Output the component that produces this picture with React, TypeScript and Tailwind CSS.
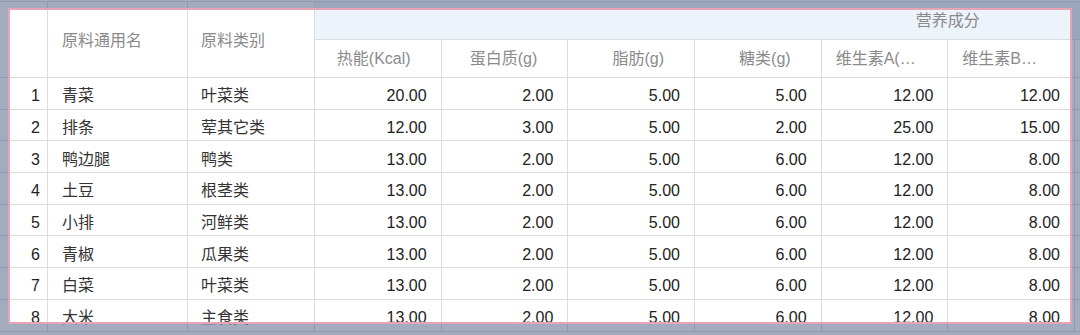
import React from 'react';

type Row = {
  name: string;
  category: string;
  values: string[];
};

const nutrients = [
  '热能(Kcal)',
  '蛋白质(g)',
  '脂肪(g)',
  '糖类(g)',
  '维生素A(μg)',
  '维生素B1(mg)',
  '维生素C(mg)',
  '钙(mg)',
  '铁(mg)',
  '锌(mg)',
];

const rows: Row[] = [
  { name: '青菜', category: '叶菜类', values: ['20.00', '2.00', '5.00', '5.00', '12.00', '12.00'] },
  { name: '排条', category: '荤其它类', values: ['12.00', '3.00', '5.00', '2.00', '25.00', '15.00'] },
  { name: '鸭边腿', category: '鸭类', values: ['13.00', '2.00', '5.00', '6.00', '12.00', '8.00'] },
  { name: '土豆', category: '根茎类', values: ['13.00', '2.00', '5.00', '6.00', '12.00', '8.00'] },
  { name: '小排', category: '河鲜类', values: ['13.00', '2.00', '5.00', '6.00', '12.00', '8.00'] },
  { name: '青椒', category: '瓜果类', values: ['13.00', '2.00', '5.00', '6.00', '12.00', '8.00'] },
  { name: '白菜', category: '叶菜类', values: ['13.00', '2.00', '5.00', '6.00', '12.00', '8.00'] },
  { name: '大米', category: '主食类', values: ['13.00', '2.00', '5.00', '6.00', '12.00', '8.00'] },
];

const gridCols = 'grid grid-cols-[48px_140px_127px_repeat(10,126.67px)]';
const cell = 'border-r border-b border-[#dcdcdc] overflow-hidden whitespace-nowrap';

export default function App() {
  return (
    <div className="relative w-[1080px] h-[335px] overflow-hidden bg-white font-['Liberation_Sans','Noto_Sans_CJK_SC',sans-serif] text-[16px]">
      <div className="pt-px">
        {/* header */}
        <div className={`${gridCols} grid-rows-[38px_38px] border-t border-[#dcdcdc] text-[#8a8a8a]`}>
          <div className={`${cell} row-span-2`} />
          <div className={`${cell} row-span-2 flex items-center pl-[14px] pt-[2px]`}>原料通用名</div>
          <div className={`${cell} row-span-2 flex items-center pl-[13px] pt-[2px]`}>原料类别</div>
          <div className={`${cell} col-span-10 flex items-center justify-center bg-[#edf3fb]`}>营养成分</div>
          {nutrients.map((n) => (
            <div key={n} className={`${cell} flex items-center justify-end pl-[14px] pr-[30px]`}>
              <span className="block overflow-hidden text-ellipsis">{n}</span>
            </div>
          ))}
        </div>

        {/* body */}
        {rows.map((r, i) => (
          <div key={i} className={`${gridCols} h-[31.7px] text-[#333]`}>
            <div className={`${cell} flex items-center justify-end pr-[7px] pt-[6px] text-[#222]`}>{i + 1}</div>
            <div className={`${cell} flex items-center pl-[14px] pt-[6px]`}>{r.name}</div>
            <div className={`${cell} flex items-center pl-[13px] pt-[6px]`}>{r.category}</div>
            {nutrients.map((n, j) => (
              <div key={n} className={`${cell} flex items-center justify-end pr-[14px] pt-[6px] text-[#222]`}>
                {r.values[j] ?? ''}
              </div>
            ))}
          </div>
        ))}
      </div>

      {/* selection mask */}
      <div className="absolute left-0 top-0 w-full h-[8px] bg-[rgba(70,90,125,0.5)]" />
      <div className="absolute left-0 top-[324px] w-full h-[11px] bg-[rgba(70,90,125,0.5)]" />
      <div className="absolute left-0 top-[8px] w-[8px] h-[316px] bg-[rgba(70,90,125,0.5)]" />
      <div className="absolute left-[1072px] top-[8px] w-[8px] h-[316px] bg-[rgba(70,90,125,0.5)]" />
      <div className="absolute left-[8px] top-[8px] w-[1064px] h-[316px] border-2 border-[#e8a4b7]" />
    </div>
  );
}
